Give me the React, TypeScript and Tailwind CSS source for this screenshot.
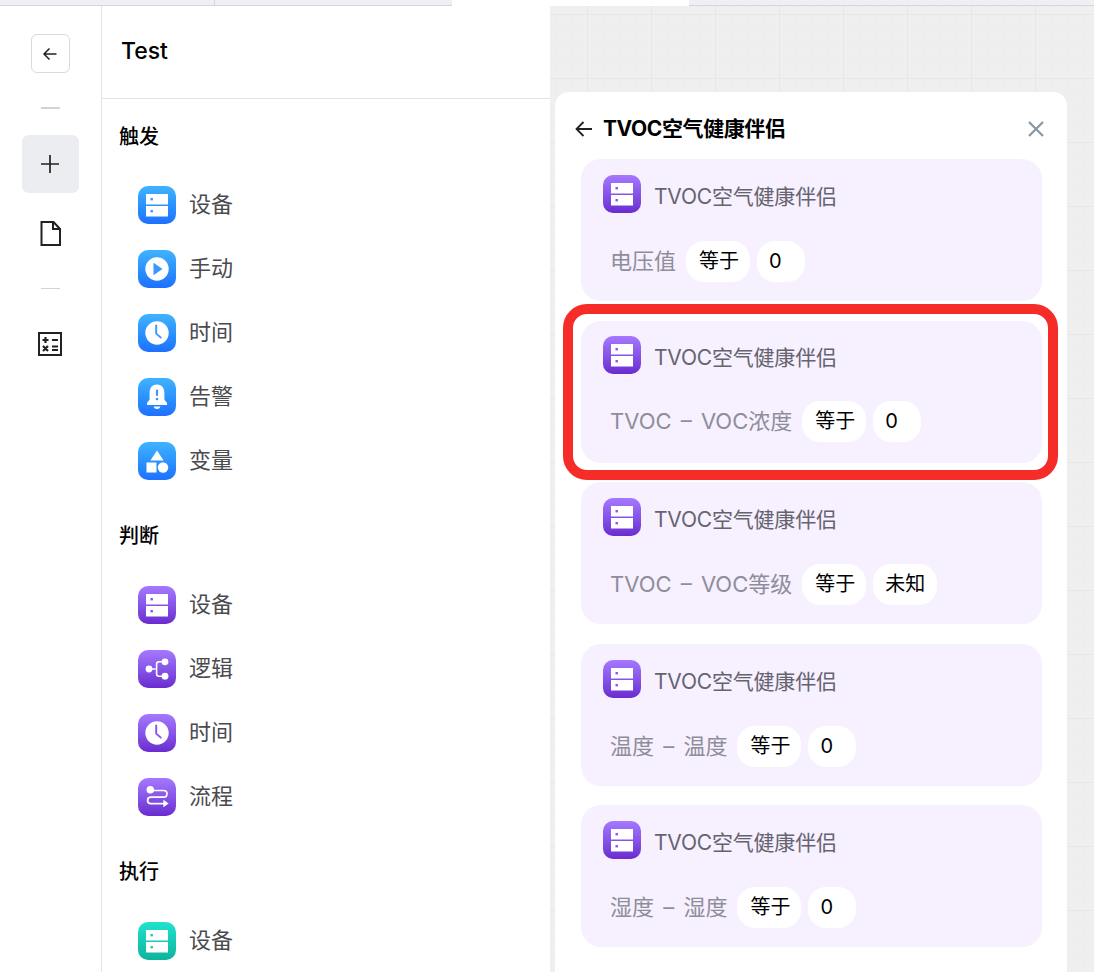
import React from 'react';

const FONT = 'font-["Inter","Noto_Sans_CJK_SC",sans-serif]';

const DeviceIcon: React.FC<{ dot: string }> = ({ dot }) => (
  <>
    <rect x="8" y="8" width="22" height="10.5" fill="#fff" />
    <rect x="8" y="20" width="22" height="10.5" fill="#fff" />
    <rect x="12.5" y="12" width="2.4" height="2.4" fill={dot} />
    <rect x="12.5" y="24" width="2.4" height="2.4" fill={dot} />
  </>
);

const PlayIcon: React.FC<{ dot: string }> = ({ dot }) => (
  <>
    <circle cx="19" cy="19" r="11.7" fill="#fff" />
    <path d="M15.5 12.8 L24.5 19 L15.5 25.2 Z" fill={dot} />
  </>
);

const ClockIcon: React.FC<{ dot: string }> = ({ dot }) => (
  <>
    <circle cx="19" cy="19" r="11.7" fill="#fff" />
    <path d="M18.2 11.5 V19.6 L22.8 23.6" fill="none" stroke={dot} strokeWidth="1.9" strokeLinecap="round" strokeLinejoin="round" />
  </>
);

const BellIcon: React.FC = () => (
  <>
    <path
      d="M19 6.5 C13.6 6.5 11.6 10.6 11.6 15 V21 C11.6 23 9 23.6 9 25.3 V27 H29 V25.3 C29 23.6 26.4 23 26.4 21 V15 C26.4 10.6 24.4 6.5 19 6.5 Z"
      fill="#fff"
    />
    <rect x="17.9" y="11.5" width="2.2" height="6.6" rx="1" fill="#3b96ff" />
    <circle cx="19" cy="21" r="1.35" fill="#3b96ff" />
    <path d="M15.6 28.6 H22.4 C21.8 30.4 20.5 31 19 31 C17.5 31 16.2 30.4 15.6 28.6 Z" fill="#fff" />
  </>
);

const ShapesIcon: React.FC = () => (
  <>
    <path d="M19 8.5 L25.6 18.5 H12.4 Z" fill="#fff" />
    <rect x="8.5" y="20.5" width="10" height="10" fill="#fff" />
    <circle cx="25" cy="25.5" r="5.2" fill="#fff" />
  </>
);

const LogicIcon: React.FC = () => (
  <>
    <path d="M11 19 H17.5 M27 11.8 H21 C19.4 11.8 18.6 12.8 18.6 14.2 V23.8 C18.6 25.4 19.4 26.2 21 26.2 H27" fill="none" stroke="#fff" strokeWidth="1.6" />
    <circle cx="11" cy="19" r="3.4" fill="#fff" />
    <circle cx="27" cy="11.8" r="3.4" fill="#fff" />
    <circle cx="27" cy="26.2" r="3.4" fill="#fff" />
  </>
);

const FlowIcon: React.FC = () => (
  <>
    <circle cx="12.3" cy="11.7" r="3.8" fill="#fff" />
    <path
      d="M15 12.5 H25.5 C27.8 12.5 29 14 29 15.8 C29 17.7 27.8 19.2 25.5 19.2 H13 C10.6 19.2 9.6 20.9 9.6 22.4 C9.6 24.1 10.7 25.6 13 25.6 H27.5"
      fill="none"
      stroke="#fff"
      strokeWidth="1.7"
    />
    <path d="M25.4 21.8 L30.6 25.6 L25.4 29.2 Z" fill="#fff" />
  </>
);

const themes = {
  blue: { dot: '#3b96ff', box: 'bg-gradient-to-b from-[#40b3ff] to-[#1f70ff]' },
  purple: { dot: '#8a52ec', box: 'bg-gradient-to-b from-[#a678ff] to-[#6a2bcf]' },
  teal: { dot: '#18c9b4', box: 'bg-gradient-to-b from-[#1fe3cf] to-[#0fb39c]' },
};

type Theme = keyof typeof themes;
type Kind = 'device' | 'play' | 'clock' | 'bell' | 'shapes' | 'logic' | 'flow';

const Tile: React.FC<{ theme: Theme; kind: Kind }> = ({ theme, kind }) => {
  const t = themes[theme];
  return (
    <div className={`w-[38px] h-[38px] shrink-0 rounded-[10px] ${t.box}`}>
      <svg viewBox="0 0 38 38" className="w-full h-full">
        {kind === 'device' && <DeviceIcon dot={t.dot} />}
        {kind === 'play' && <PlayIcon dot={t.dot} />}
        {kind === 'clock' && <ClockIcon dot={t.dot} />}
        {kind === 'bell' && <BellIcon />}
        {kind === 'shapes' && <ShapesIcon />}
        {kind === 'logic' && <LogicIcon />}
        {kind === 'flow' && <FlowIcon />}
      </svg>
    </div>
  );
};

const sections: { title: string; theme: Theme; first?: boolean; items: { label: string; kind: Kind }[] }[] = [
  {
    title: '触发',
    theme: 'blue',
    first: true,
    items: [
      { label: '设备', kind: 'device' },
      { label: '手动', kind: 'play' },
      { label: '时间', kind: 'clock' },
      { label: '告警', kind: 'bell' },
      { label: '变量', kind: 'shapes' },
    ],
  },
  {
    title: '判断',
    theme: 'purple',
    items: [
      { label: '设备', kind: 'device' },
      { label: '逻辑', kind: 'logic' },
      { label: '时间', kind: 'clock' },
      { label: '流程', kind: 'flow' },
    ],
  },
  {
    title: '执行',
    theme: 'teal',
    items: [{ label: '设备', kind: 'device' }],
  },
];

const cards = [
  { label: '电压值', value: '0' },
  { label: 'TVOC – VOC浓度', value: '0', marked: true },
  { label: 'TVOC – VOC等级', value: '未知' },
  { label: '温度 – 温度', value: '0' },
  { label: '湿度 – 湿度', value: '0' },
];

const Rail = () => (
  <div className="w-[102px] shrink-0 border-r border-[#e4e4e8] bg-white flex flex-col items-center pr-px">
    <button className="mt-[28px] w-[39px] h-[39px] rounded-[6px] border border-[#d9d9de] bg-white flex items-center justify-center">
      <svg width="16" height="14" viewBox="0 0 16 14" fill="none" stroke="#222" strokeWidth="1.5">
        <path d="M14.5 7 H2 M7.5 1.5 L2 7 L7.5 12.5" />
      </svg>
    </button>
    <div className="mt-[34px] w-[19px] h-[2px] bg-[#d2d2d8]" />
    <div className="mt-[26px] w-[57px] h-[58px] rounded-[7px] bg-[#ecedf1] flex items-center justify-center">
      <svg width="18" height="18" viewBox="0 0 18 18" stroke="#222" strokeWidth="1.7">
        <path d="M9 0 V18 M0 9 H18" />
      </svg>
    </div>
    <svg className="mt-[28px]" width="21" height="25" viewBox="0 0 21 25" fill="none" stroke="#222" strokeWidth="2">
      <path d="M1.5 1 H13.5 L20 8 V24 H1.5 Z M13 1 V8 H20" />
    </svg>
    <div className="mt-[42px] w-[19px] h-px bg-[#d2d2d8]" />
    <svg className="mt-[43px]" width="24" height="24" viewBox="0 0 24 24" fill="none" stroke="#222">
      <rect x="1" y="1" width="22" height="22" strokeWidth="2" />
      <path d="M4.5 8 H10.5 M7.5 5 V11 M14 8 H20 M14 14.5 H20 M14 18 H20 M5 14 L10 19 M10 14 L5 19" strokeWidth="2.2" />
    </svg>
  </div>
);

const Palette = () => (
  <div className="w-[448px] shrink-0 bg-white overflow-hidden">
    <div className="h-[93px] border-b border-[#e4e4e8] pl-[19px] pt-[30px] text-[23px] leading-[30px] font-medium text-black">Test</div>
    {sections.map((s) => (
      <div key={s.title}>
        <h3 className={`pl-[17px] h-[28px] text-[20px] leading-[28px] font-medium text-black ${s.first ? 'mt-[24px] mb-[22px]' : 'mt-[29px] mb-[23px]'}`}>
          {s.title}
        </h3>
        {s.items.map((item) => (
          <div key={item.label} className="h-16 pl-9 flex items-center gap-[13px]">
            <Tile theme={s.theme} kind={item.kind} />
            <span className="pb-[2px] text-[22px] text-[#4a4a4f]">{item.label}</span>
          </div>
        ))}
      </div>
    ))}
  </div>
);

const Card: React.FC<{ label: string; value: string; marked?: boolean }> = ({ label, value, marked }) => (
  <div className={`relative shrink-0 h-[142px] rounded-[20px] bg-[#f6f0ff] ${marked ? 'pt-[15px]' : 'pt-4'}`}>
    <div className="h-[38px] flex items-center pl-[22px] gap-[13px]">
      <Tile theme="purple" kind="device" />
      <span className="pt-[6px] text-[21px] leading-[38px] tracking-[-0.2px] text-[#66636f]">TVOC空气健康伴侣</span>
    </div>
    <div className={`flex items-center pl-[29px] ${marked ? 'mt-[27px]' : 'mt-7'}`}>
      <span className="text-[22px] text-[#8f8d9a] mr-[10px] [word-spacing:3px]">{label}</span>
      <span className="h-[41px] pl-[13px] pr-[11px] rounded-[18px] bg-white text-[20px] leading-[41px] text-black">等于</span>
      <span className="ml-[7px] h-[41px] min-w-[48px] px-3 rounded-[18px] bg-white text-[20px] leading-[41px] text-black">{value}</span>
    </div>
    {marked && (
      <div className="absolute -left-[18px] -right-[16px] -top-[17px] -bottom-[17px] rounded-[24px] border-[10px] border-[#f52c27]" />
    )}
  </div>
);

const Flyout = () => (
  <div className="ml-[5px] mt-[86px] w-[512px] h-[900px] rounded-t-[14px] bg-white px-[26px] overflow-hidden">
    <div className="h-[67px] pt-[6px] -ml-[6px] flex items-center">
      <svg width="17" height="16" viewBox="0 0 17 16" fill="none" stroke="#222" strokeWidth="1.8">
        <path d="M17 8 H1.5 M8.5 1 L1.5 8 L8.5 15" />
      </svg>
      <span className="ml-[11px] text-[21px] font-bold text-black tracking-[-0.4px]">TVOC空气健康伴侣</span>
      <svg className="ml-auto mr-[-3px]" width="16" height="16" viewBox="0 0 16 16" stroke="#8796a5" strokeWidth="2.2">
        <path d="M1 1 L15 15 M15 1 L1 15" />
      </svg>
    </div>
    <div className="w-[461px] flex flex-col gap-[19.5px]">
      {cards.map((c) => (
        <Card key={c.label} {...c} />
      ))}
    </div>
  </div>
);

export default function App() {
  return (
    <div className={`w-[1094px] h-[972px] overflow-hidden flex flex-col bg-white ${FONT}`}>
      {/* tab strip */}
      <div className="h-[6px] shrink-0 flex border-b border-[#d5d6da] bg-[#eff0f4]">
        <div className="w-[215px] border-r border-[#d5d6da]" />
        <div className="w-[237px]" />
        <div className="w-[237px] h-[6px] bg-white" />
      </div>
      <div className="flex-1 flex min-h-0">
        <Rail />
        <Palette />
        {/* canvas */}
        <div className="flex-1 min-w-0 overflow-hidden bg-[#efefef] bg-[linear-gradient(#e7e7e7_1px,transparent_1px),linear-gradient(90deg,#e7e7e7_1px,transparent_1px),linear-gradient(#ededed_1px,transparent_1px),linear-gradient(90deg,#ededed_1px,transparent_1px)] bg-[length:64px_64px,64px_64px,16px_16px,16px_16px] bg-[position:37px_8px,37px_8px,5px_8px,5px_8px]">
          <Flyout />
        </div>
      </div>
    </div>
  );
}
